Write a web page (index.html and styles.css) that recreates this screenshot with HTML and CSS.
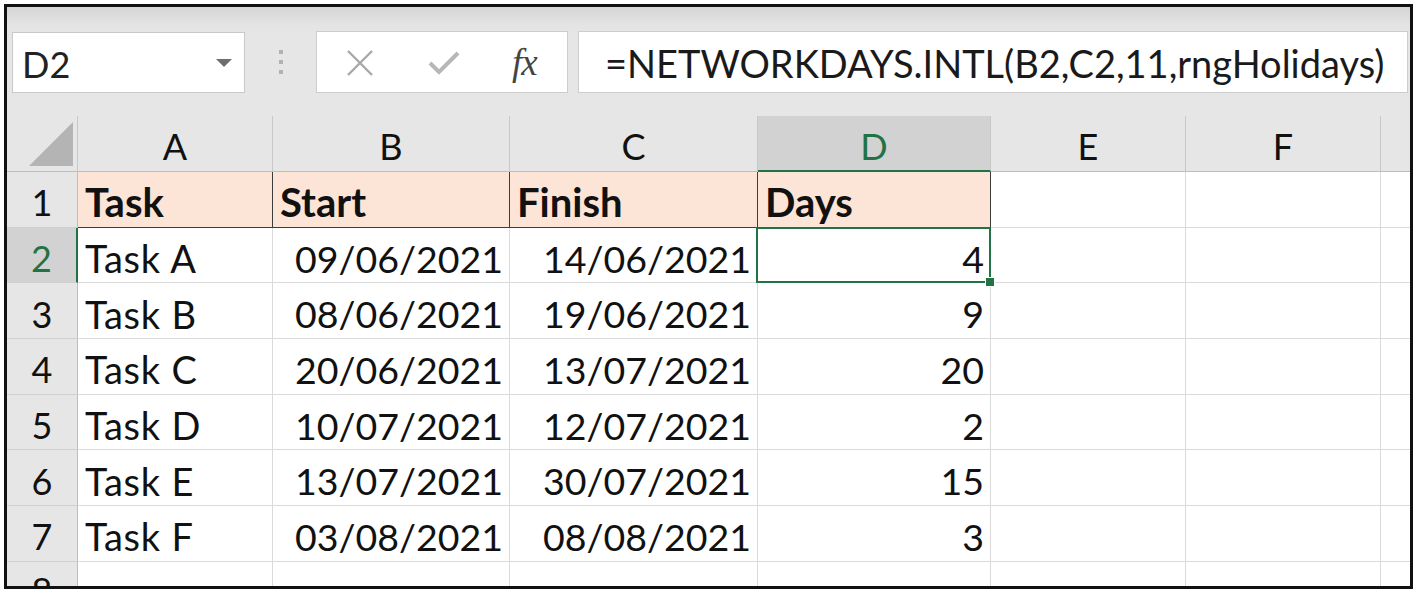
FILE: index.html
```html
<!DOCTYPE html>
<html>
<head>
<meta charset="utf-8">
<title>Excel NETWORKDAYS.INTL</title>
<link rel="stylesheet" href="styles.css">
</head>
<body>
<div class="frame">
  <div class="fbar">
    <div class="namebox">
      <span class="name">D2</span>
      <span class="dd"></span>
    </div>
    <div class="grip"><i></i><i></i><i></i></div>
    <div class="fxbox">
      <svg class="ic-x" width="30" height="28" viewBox="0 0 30 28"><path d="M3 2 L27 26 M27 2 L3 26" stroke="#a8a8a8" stroke-width="2.4" fill="none"/></svg>
      <svg class="ic-ok" width="32" height="26" viewBox="0 0 32 26"><path d="M2 13 L11 22 L30 3" stroke="#b7b7b7" stroke-width="4" fill="none"/></svg>
      <span class="fx">fx</span>
    </div>
    <div class="formula">=NETWORKDAYS.INTL(B2,C2,11,rngHolidays)</div>
  </div>
  <div class="sheet">
    <div class="ch corner"><span class="tri"></span></div>
    <div class="ch">A</div>
    <div class="ch">B</div>
    <div class="ch">C</div>
    <div class="ch sel">D</div>
    <div class="ch">E</div>
    <div class="ch">F</div>
    <div class="ch last"></div>

    <div class="rh">1</div>
    <div class="c hd dark">Task</div>
    <div class="c hd dark">Start</div>
    <div class="c hd dark">Finish</div>
    <div class="c hd dark">Days</div>
    <div class="c"></div>
    <div class="c"></div>
    <div class="c last"></div>

    <div class="rh sel">2</div>
    <div class="c t">Task A</div>
    <div class="c r">09/06/2021</div>
    <div class="c r">14/06/2021</div>
    <div class="c r active">4</div>
    <div class="c"></div>
    <div class="c"></div>
    <div class="c last"></div>

    <div class="rh">3</div>
    <div class="c t">Task B</div>
    <div class="c r">08/06/2021</div>
    <div class="c r">19/06/2021</div>
    <div class="c r">9</div>
    <div class="c"></div>
    <div class="c"></div>
    <div class="c last"></div>

    <div class="rh">4</div>
    <div class="c t">Task C</div>
    <div class="c r">20/06/2021</div>
    <div class="c r">13/07/2021</div>
    <div class="c r">20</div>
    <div class="c"></div>
    <div class="c"></div>
    <div class="c last"></div>

    <div class="rh">5</div>
    <div class="c t">Task D</div>
    <div class="c r">10/07/2021</div>
    <div class="c r">12/07/2021</div>
    <div class="c r">2</div>
    <div class="c"></div>
    <div class="c"></div>
    <div class="c last"></div>

    <div class="rh">6</div>
    <div class="c t">Task E</div>
    <div class="c r">13/07/2021</div>
    <div class="c r">30/07/2021</div>
    <div class="c r">15</div>
    <div class="c"></div>
    <div class="c"></div>
    <div class="c last"></div>

    <div class="rh">7</div>
    <div class="c t">Task F</div>
    <div class="c r">03/08/2021</div>
    <div class="c r">08/08/2021</div>
    <div class="c r">3</div>
    <div class="c"></div>
    <div class="c"></div>
    <div class="c last"></div>

    <div class="rh">8</div>
    <div class="c"></div>
    <div class="c"></div>
    <div class="c"></div>
    <div class="c"></div>
    <div class="c"></div>
    <div class="c"></div>
    <div class="c last"></div>
  </div>
</div>
</body>
</html>
```
FILE: styles.css
```css
* { box-sizing: border-box; }
html, body { margin: 0; padding: 0; background: #fff; }
body {
  width: 1418px;
  height: 593px;
  overflow: hidden;
  font-family: Lato, "Noto Sans", sans-serif;
  color: #111;
}
.frame {
  margin: 4px 0 0 4px;
  width: 1409px;
  height: 585px;
  border: 3px solid #111;
  display: flex;
  flex-direction: column;
  overflow: hidden;
  background: #fff;
}
.fbar {
  height: 109px;
  flex: none;
  background: linear-gradient(#d5d5d5 0, #e4e4e4 18px, #e6e6e6 30px);
  display: flex;
  align-items: flex-start;
  padding-top: 24px;
  padding-left: 5px;
}
.namebox {
  margin-top: 1px;
  width: 233px;
  height: 61px;
  background: #fff;
  border: 1px solid #c9c9c9;
  display: flex;
  align-items: center;
  justify-content: space-between;
  padding: 0 12px 0 9px;
}
.name { font-size: 36px; color: #222; padding-top: 2px; }
.dd {
  width: 0; height: 0;
  border-left: 8px solid transparent;
  border-right: 8px solid transparent;
  border-top: 8px solid #6e6e6e;
}
.grip {
  width: 71px;
  height: 62px;
  display: flex;
  flex-direction: column;
  align-items: center;
  justify-content: center;
  gap: 6px;
}
.grip i {
  display: block;
  width: 4px;
  height: 4px;
  background: #b2b2b2;
}
.fxbox {
  width: 252px;
  height: 62px;
  background: #fff;
  border: 1px solid #cdcdcd;
  display: flex;
  align-items: center;
  padding-left: 28px;
}
.ic-x { margin-top: 1px; }
.ic-ok { margin-left: 53px; margin-top: 2px; }
.fx {
  margin-left: 52px;
  font-family: "Liberation Serif", serif;
  font-style: italic;
  font-size: 37px;
  color: #444;
  letter-spacing: -1px;
}
.formula {
  margin-left: 10px;
  width: 830px;
  height: 62px;
  background: #fff;
  border: 1px solid #cdcdcd;
  display: flex;
  align-items: center;
  padding-left: 26px;
  padding-top: 2px;
  font-size: 38px;
  color: #1a1a1a;
  white-space: nowrap;
}
.sheet {
  flex: 1;
  display: grid;
  grid-template-columns: 71px 195px 237px 248px 233px 195px 195px 29px;
  grid-template-rows: 56px repeat(7, 55.7px) 1fr;
  background: #fff;
  overflow: hidden;
}
.ch {
  background: #e6e6e6;
  border-right: 1px solid #c8c8c8;
  border-bottom: 1px solid #bdbdbd;
  display: flex;
  align-items: center;
  justify-content: center;
  font-size: 36px;
  padding-top: 5px;
  color: #111;
}
.ch.sel {
  background: #d2d2d2;
  color: #217346;
  border-bottom: 2px solid #217346;
}
.ch.last { border-right: none; }
.corner {
  position: relative;
  border-right: 1px solid #c8c8c8;
}
.tri {
  position: absolute;
  right: 4px;
  bottom: 5px;
  width: 0; height: 0;
  border-left: 44px solid transparent;
  border-bottom: 44px solid #b4b4b4;
}
.rh {
  background: #e6e6e6;
  border-right: 1px solid #bdbdbd;
  border-bottom: 1px solid #d0d0d0;
  display: flex;
  align-items: center;
  justify-content: center;
  font-size: 36px;
  padding-top: 6px;
  color: #111;
}
.rh.sel {
  background: #d2d2d2;
  color: #217346;
  border-right: 2px solid #217346;
}
.c {
  border-right: 1px solid #dadada;
  border-bottom: 1px solid #dadada;
  display: flex;
  align-items: center;
  padding: 6px 8px 0 7px;
  font-size: 38px;
  white-space: nowrap;
  overflow: visible;
}
.c.t { letter-spacing: 0.8px; }
.c.last { border-right: none; }
.c.r { justify-content: flex-end; padding-right: 6px; font-size: 37.5px; }
.c.hd {
  background: #fce4d6;
  font-weight: 700;
  font-size: 40px;
}
.c.dark {
  border-right: 1px solid #3c3c3c;
  border-bottom: 1px solid #3c3c3c;
}
.c.active { position: relative; }
.c.active::after {
  content: "";
  position: absolute;
  left: -2px;
  top: -1px;
  right: -1px;
  bottom: -1px;
  border: 2px solid #217346;
}
.c.active::before {
  content: "";
  position: absolute;
  right: -5px;
  bottom: -5px;
  width: 8px;
  height: 8px;
  background: #217346;
  border: 1px solid #fff;
  z-index: 2;
}
```
